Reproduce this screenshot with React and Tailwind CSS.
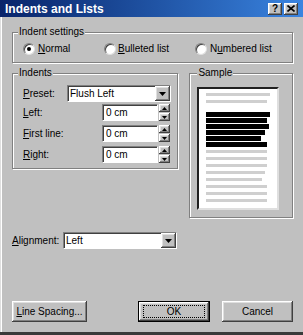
import React from "react";

const raised =
  "bg-[#c0c0c0] shadow-[inset_-1px_-1px_0_#404040,inset_1px_1px_0_#fff,inset_-2px_-2px_0_#808080,inset_2px_2px_0_#dfdfdf]";
const sunken =
  "bg-white border border-t-[#808080] border-l-[#808080] border-r-white border-b-white shadow-[inset_1px_1px_0_#404040]";
const etched =
  "border border-[#808080] shadow-[inset_1px_1px_0_#fff,1px_1px_0_#fff]";

// small triangle for combo / spin buttons
const Arrow = ({ up = false, size = 7 }) => (
  <svg width={size} height={Math.ceil(size / 2)} viewBox="0 0 7 4">
    {up ? <path d="M3.5 0 L7 4 L0 4 Z" fill="#000" /> : <path d="M0 0 L7 0 L3.5 4 Z" fill="#000" />}
  </svg>
);

const Radio = ({ checked }) => (
  <span className="relative w-[12px] h-[12px] rounded-full bg-white border border-t-[#808080] border-l-[#808080] border-r-[#dfdfdf] border-b-[#dfdfdf] shadow-[inset_1px_1px_0_#404040] flex items-center justify-center">
    {checked && <span className="w-[4px] h-[4px] rounded-full bg-black" />}
  </span>
);

const Combo = ({ value, width }) => (
  <div className={`flex items-center h-[17px] ${sunken} ${width}`}>
    <span className="flex-1 pl-[2px] leading-[15px]">{value}</span>
    <span className={`w-[15px] h-[15px] flex items-center justify-center ${raised}`}>
      <Arrow />
    </span>
  </div>
);

const SpinRow = ({ label }) => (
  <div className="flex items-center h-[17px]">
    <span className="w-[79px]">{label}</span>
    <div className={`w-[56px] h-[17px] pl-[3px] leading-[15px] ${sunken}`}>0 cm</div>
    <div className="ml-[1px] flex flex-col">
      <span className={`w-[11px] h-[8px] flex items-center justify-center ${raised}`}>
        <Arrow up size={5} />
      </span>
      <span className={`w-[11px] h-[8px] mt-[1px] flex items-center justify-center ${raised}`}>
        <Arrow size={5} />
      </span>
    </div>
  </div>
);

const U = ({ children }) => <span className="underline underline-offset-1">{children}</span>;

const Line = ({ w, dark }) => (
  <div
    className={dark ? "h-[5px] mb-[1px] bg-black" : "h-[3px] mb-[4px] bg-[#cfcfcf]"}
    style={{ width: w }}
  />
);

export default function App() {
  return (
    <div className="w-[303px] h-[335px] bg-[#c0c0c0] flex flex-col border-b-[3px] border-b-[#3a3a3a] shadow-[inset_1px_0_0_#dfdfdf,inset_2px_0_0_#fff] font-['Liberation_Sans',Arial,sans-serif] text-[10px] text-black leading-[12px]">
      {/* title bar */}
      <div className="h-[17px] flex items-center bg-gradient-to-r from-[#0a246a] to-[#3a84e0] pl-[5px] pr-[5px]">
        <span className="flex-1 text-white font-bold text-[12px] leading-[14px]">Indents and Lists</span>
        <div className="flex gap-[2px]">
          <span className={`w-[14px] h-[12px] flex items-center justify-center font-bold text-[10px] leading-[10px] ${raised}`}>?</span>
          <span className={`w-[14px] h-[12px] flex items-center justify-center ${raised}`}>
            <svg width="8" height="7" viewBox="0 0 8 7">
              <path d="M0.5 0.5 L7.5 6.5 M7.5 0.5 L0.5 6.5" stroke="#000" strokeWidth="1.6" />
            </svg>
          </span>
        </div>
      </div>

      <div className="flex flex-col pl-[12px] pr-[10px]">
        {/* indent settings */}
        <fieldset className={`mt-[9px] ${etched}`}>
          <legend className="ml-[5px] px-[1px] leading-[12px] bg-[#c0c0c0]">Indent settings</legend>
          <div className="flex items-center h-[13px] mt-[4px] mb-[7px] pl-[10px]">
            <div className="w-[81px] flex items-center gap-[3px]">
              <Radio checked />
              <span><U>N</U>ormal</span>
            </div>
            <div className="w-[91px] flex items-center gap-[2px]">
              <Radio />
              <span><U>B</U>ulleted list</span>
            </div>
            <div className="flex items-center gap-[3px]">
              <Radio />
              <span>N<U>u</U>mbered list</span>
            </div>
          </div>
        </fieldset>

        <div className="flex items-start gap-[11px] mt-[4px]">
          {/* indents */}
          <fieldset className={`w-[167px] ${etched}`}>
            <legend className="ml-[5px] px-[1px] leading-[12px] bg-[#c0c0c0]">Indents</legend>
            <div className="flex flex-col pt-[6px] pb-[5px] pl-[10px]">
              <div className="flex items-center h-[17px] mb-[2px]">
                <span className="w-[44px]"><U>P</U>reset:</span>
                <Combo value="Flush Left" width="w-[104px]" />
              </div>
              <div className="flex flex-col gap-[4px]">
                <SpinRow label={<><U>L</U>eft:</>} />
                <SpinRow label={<><U>F</U>irst line:</>} />
                <SpinRow label={<><U>R</U>ight:</>} />
              </div>
            </div>
          </fieldset>

          {/* sample */}
          <fieldset className={`w-[104px] ${etched}`}>
            <legend className="ml-[7px] px-[1px] leading-[12px] bg-[#c0c0c0]">Sample</legend>
            <div className="pt-[8px] pb-[7px] pl-[7px]">
              <div className="w-[82px] h-[123px] bg-white border-2 border-t-[#202020] border-l-[#202020] border-r-[#dfdfdf] border-b-[#dfdfdf] pt-[4px] pl-[7px] flex flex-col">
                <Line w={64} />
                <Line w={61} />
                <div className="h-[5px]" />
                <Line w={64} dark />
                <Line w={61} dark />
                <Line w={63} dark />
                <Line w={59} dark />
                <Line w={55} dark />
                <Line w={61} dark />
                <div className="h-[2px]" />
                <Line w={61} />
                <Line w={61} />
                <Line w={61} />
                <Line w={59} />
                <Line w={56} />
                <Line w={61} />
                <Line w={61} />
                <Line w={61} />
              </div>
            </div>
          </fieldset>
        </div>

        {/* alignment */}
        <div className="flex items-center h-[17px] mt-[14px]">
          <span className="w-[51px]"><U>A</U>lignment:</span>
          <Combo value="Left" width="w-[114px]" />
        </div>

        {/* buttons */}
        <div className="flex items-center mt-[52px]">
          <button className={`w-[75px] h-[21px] text-[10px] ${raised}`}>
            <U>L</U>ine Spacing...
          </button>
          <button className="ml-[51px] w-[72px] h-[21px] border border-black p-0 bg-[#c0c0c0]">
            <span className={`w-full h-full flex items-center justify-center ${raised}`}>
              <span className="w-[62px] h-[13px] border border-dotted border-black flex items-center justify-center">
                OK
              </span>
            </span>
          </button>
          <button className={`ml-[12px] w-[71px] h-[21px] text-[10px] ${raised}`}>Cancel</button>
        </div>
      </div>
    </div>
  );
}
